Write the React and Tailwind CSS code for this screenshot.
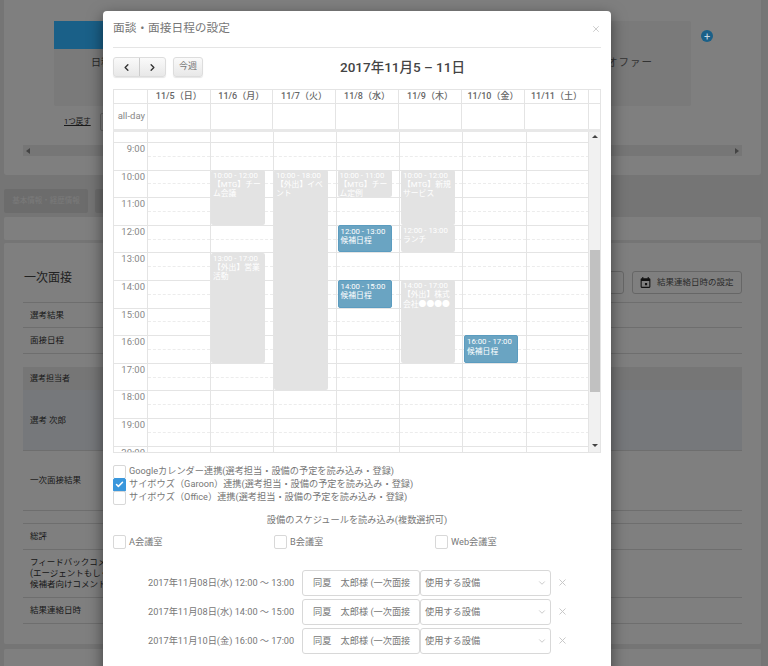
import { Check, ChevronDown, ChevronLeft, ChevronRight, X } from 'lucide-react';

const font = { fontFamily: 'Roboto, "Noto Sans CJK JP", sans-serif' };

const days = ['11/5（日）', '11/6（月）', '11/7（火）', '11/8（水）', '11/9（木）', '11/10（金）', '11/11（土）'];
const hours = [9, 10, 11, 12, 13, 14, 15, 16, 17, 18, 19, 20];

const events = [
  { x: 97, start: 10, end: 12, time: '10:00 - 12:00', title: '【MTG】チーム会議' },
  { x: 97, start: 13, end: 17, time: '13:00 - 17:00', title: '【外出】営業活動' },
  { x: 160, start: 10, end: 18, time: '10:00 - 18:00', title: '【外出】イベント' },
  { x: 223.5, start: 10, end: 11, time: '10:00 - 11:00', title: '【MTG】チーム定例' },
  { x: 223.5, start: 12, end: 13, time: '12:00 - 13:00', title: '候補日程', blue: true },
  { x: 223.5, start: 14, end: 15, time: '14:00 - 15:00', title: '候補日程', blue: true },
  { x: 287, start: 10, end: 12, time: '10:00 - 12:00', title: '【MTG】新規サービス' },
  { x: 287, start: 12, end: 13, time: '12:00 - 13:00', title: 'ランチ' },
  { x: 287, start: 14, end: 17, time: '14:00 - 17:00', title: '【外出】株式会社●●●●' },
  { x: 350, start: 16, end: 17, time: '16:00 - 17:00', title: '候補日程', blue: true },
];

const slots = [
  '2017年11月08日(水) 12:00 ～ 13:00',
  '2017年11月08日(水) 14:00 ～ 15:00',
  '2017年11月10日(金) 16:00 ～ 17:00',
];

const bodyCols = 'grid grid-cols-[33px_62.5px_63px_63px_63px_63.5px_63.5px_63px]';
const headCols = 'grid grid-cols-[33px_62.5px_62.5px_63px_63px_63px_63px_64px_1fr]';

function Box({ checked }) {
  return (
    <span className={`flex h-[14px] w-[13px] shrink-0 items-center justify-center rounded-[2px] border ${checked ? 'border-[#3a97dc] bg-[#3a97dc]' : 'border-[#d8d8d8] bg-white'}`}>
      {checked && <Check className="h-[9px] w-[9px] text-white" strokeWidth={4} />}
    </span>
  );
}

function Row({ label, className = '' }) {
  return <div className={`flex items-center border-b border-[#dcdcdc] pl-[7px] text-[8.5px] text-[#333] ${className}`}>{label}</div>;
}

function Background() {
  return (
    <div className="w-[757px] ml-[4px] flex flex-col">
      <div className="h-[175px] rounded-b-[3px] bg-white pl-[50px] pt-[21px]">
        <div className="flex items-start">
          <div className="flex h-[85px] w-[637px] rounded-[2px] bg-[#f4f4f4]">
            <div className="w-[150px]">
              <div className="relative z-10 flex h-[28px] items-center justify-center bg-[#1a6088]">
                <span className="h-px w-[12px] bg-[#8fb4c9]" />
              </div>
              <div className="mt-[6px] pl-[37px] text-[10px] text-[#555]">日程調整</div>
            </div>
            <div className="flex-1 pr-[38px] pt-[34px] text-right text-[10.5px] tracking-[1px] text-[#666]">オファー</div>
          </div>
          <div className="relative z-10 ml-[10px] mt-[9px] flex h-[12px] w-[12px] items-center justify-center rounded-full bg-[#1a6088] text-[11px] leading-none text-[#c8d8e2]">+</div>
        </div>
        <div className="flex items-center pl-[10px] pt-[7px]">
          <span className="text-[7.5px] text-[#333] underline">1つ戻す</span>
          <span className="ml-[9px] h-[18px] w-[40px] rounded-[2px] border border-[#ccc]" />
        </div>
        <div className="-ml-[31px] mt-[14px] flex h-[11px] w-[719px] items-center justify-between bg-[#ededed] px-[3px]">
          <span className="h-0 w-0 border-y-[3px] border-r-[4px] border-y-transparent border-r-[#888]" />
          <span className="h-0 w-0 border-y-[3px] border-l-[4px] border-y-transparent border-l-[#888]" />
        </div>
      </div>

      <div className="mt-[14px] flex h-[24px] gap-[7px]">
        <div className="flex w-[84px] items-center justify-center rounded-[2px] bg-[#d8d8d8] text-[7.5px] text-[#f4f4f4]">基本情報・経歴情報</div>
        <div className="w-[84px] rounded-[2px] bg-[#d8d8d8]" />
      </div>
      <div className="mt-[4px] h-[23px] rounded-[2px] bg-white" />

      <div className="mt-[3px] h-[401px] rounded-[2px] bg-white px-[19px]">
        <div className="flex h-[60px] items-start justify-between border-b border-[#dcdcdc] pt-[28px]">
          <h2 className="pl-px pt-px text-[12px] leading-[12px] text-[#444]">一次面接</h2>
          <div className="flex gap-[8px]">
            <div className="h-[23px] w-[40px] rounded-[3px] border border-[#ccc]" />
            <div className="flex h-[23px] w-[110px] items-center gap-[5px] rounded-[3px] border border-[#ccc] pl-[6px] text-[8.5px] text-[#555]">
              <svg viewBox="0 0 24 24" className="h-[13px] w-[13px] fill-[#222]">
                <path d="M19 4h-1V2h-2v2H8V2H6v2H5a2 2 0 0 0-2 2v14a2 2 0 0 0 2 2h14a2 2 0 0 0 2-2V6a2 2 0 0 0-2-2Zm0 16H5V9h14v11ZM11 13h4v4h-4v-4Z" />
              </svg>
              結果連絡日時の設定
            </div>
          </div>
        </div>
        <Row label="選考結果" className="h-[25px]" />
        <Row label="面接日程" className="h-[26px]" />
        <div className="mt-[13px] flex h-[23px] items-center bg-[#ededed] pl-[7px] text-[8px] text-[#333]">選考担当者</div>
        <Row label="選考 次郎" className="h-[61px] bg-[#edf1f6]" />
        <Row label="一次面接結果" className="h-[60px]" />
        <Row label="" className="h-[13px]" />
        <Row label="総評" className="h-[26px]" />
        <Row
          label={<span className="leading-[11px]">フィードバックコメント<br />(エージェントもしくは<br />候補者向けコメント)</span>}
          className="h-[48px]"
        />
        <Row label="結果連絡日時" className="h-[26px]" />
      </div>
      <div className="mt-[5px] h-[40px] rounded-[2px] bg-white" />
    </div>
  );
}

function Calendar() {
  return (
    <div className="border-r border-[#e4e4e4] text-[#666]">
      <div className={`${headCols} border-y border-l border-[#e4e4e4]`}>
        <div className="h-[12.5px]" />
        {days.map(d => (
          <div key={d} className="flex h-[12.5px] items-center justify-center whitespace-nowrap border-l border-[#e4e4e4] text-[9px] font-medium">{d}</div>
        ))}
        <div className="border-l border-[#e4e4e4]" />
      </div>
      <div className={`${headCols} h-[28px] border-b-[3px] border-l border-[#e8e8e8]`}>
        <div className="flex items-center justify-end pr-[2px] text-[9.5px] text-[#888]">all-day</div>
        {days.map(d => <div key={d} className="border-l border-[#e4e4e4]" />)}
        <div className="border-l border-[#e4e4e4]" />
      </div>

      <div className="flex h-[321px] border-b border-l border-[#e4e4e4]">
        <div className="relative w-[475px] overflow-hidden">
          <div className={`${bodyCols} h-[10.6px]`}>
            {Array.from({ length: 8 }, (_, i) => <div key={i} className={i ? 'border-l border-[#e4e4e4]' : ''} />)}
          </div>
          {hours.map(h => (
            <div key={h} className={`${bodyCols} h-[27.6px] border-t border-[#e4e4e4]`}>
              <div className="pr-[2px] pt-[1px] text-right text-[9.5px] leading-[10px] text-[#888]">{h}:00</div>
              {Array.from({ length: 7 }, (_, i) => (
                <div key={i} className="border-l border-[#e4e4e4]">
                  <div className="h-[13.8px] border-b border-dashed border-[#ececec]" />
                </div>
              ))}
            </div>
          ))}
          {events.map(e => (
            <div
              key={e.x + e.time}
              className={`absolute w-[54px] overflow-hidden rounded-[2px] px-[2px] text-[7.8px] leading-[9.3px] text-white ${e.blue ? 'border border-[#5b9cc0] bg-[#6aa4c2]' : 'bg-[#e3e3e3]'}`}
              style={{ left: e.x, top: 10.6 + (e.start - 9) * 27.6, height: (e.end - e.start) * 27.6 }}
            >
              <div className="pt-[1px]">{e.time}</div>
              <div>{e.title}</div>
            </div>
          ))}
        </div>
        <div className="relative w-[12px] border-l border-[#e4e4e4] bg-[#f1f1f1]">
          <span className="absolute left-[3px] top-[3px] h-0 w-0 border-x-[3px] border-b-[3px] border-x-transparent border-b-[#444]" />
          <div className="absolute left-[1px] top-[118px] h-[142px] w-[10px] bg-[#c1c1c1]" />
          <span className="absolute bottom-[5px] left-[3px] h-0 w-0 border-x-[3px] border-t-[3px] border-x-transparent border-t-[#444]" />
        </div>
      </div>
    </div>
  );
}

export default function App() {
  return (
    <div className="relative h-[666px] w-[768px] overflow-hidden bg-[#ebebeb]" style={font}>
      <Background />
      <div className="absolute inset-0 bg-black/50" />

      <div className="absolute left-[103px] top-[11px] z-20 h-[680px] w-[508px] rounded-[4px] bg-white px-[10px] text-[#777] shadow-[0_5px_15px_rgba(0,0,0,0.5)]">
        <div className="flex h-[37px] items-center justify-between border-b border-[#e5e5e5] pb-[1px]">
          <h3 className="text-[11.7px] text-[#777]">面談・面接日程の設定</h3>
          <X className="h-[10px] w-[10px] text-[#c4c4c4]" strokeWidth={2} />
        </div>

        <div className="mt-[9px] flex h-[20px] items-center">
          <div className="flex h-[20px] w-[53px] rounded-[3px] border border-[#ddd] bg-gradient-to-b from-[#fafafa] to-[#e8e8e8] shadow-[0_1px_1px_rgba(0,0,0,0.1)]">
            <div className="flex flex-1 items-center justify-center border-r border-[#ccc]">
              <ChevronLeft className="h-[11px] w-[11px] text-[#333]" strokeWidth={3} />
            </div>
            <div className="flex flex-1 items-center justify-center">
              <ChevronRight className="h-[11px] w-[11px] text-[#333]" strokeWidth={3} />
            </div>
          </div>
          <div className="ml-[7px] flex h-[20px] w-[30px] items-center justify-center rounded-[3px] border border-[#ddd] bg-gradient-to-b from-[#fafafa] to-[#e8e8e8] text-[9px] text-[#777] shadow-[0_1px_1px_rgba(0,0,0,0.1)]">今週</div>
          <h2 className="ml-[137px] whitespace-nowrap text-[13.5px] font-medium text-[#444]">2017年11月5 – 11日</h2>
        </div>

        <div className="mt-[12px]">
          <Calendar />
        </div>

        <div className="mt-[12px] text-[9.2px]">
          {['Googleカレンダー連携(選考担当・設備の予定を読み込み・登録)', 'サイボウズ（Garoon）連携(選考担当・設備の予定を読み込み・登録)', 'サイボウズ（Office）連携(選考担当・設備の予定を読み込み・登録)'].map((t, i) => (
            <div key={t} className="flex h-[13px] items-start gap-[3px] whitespace-nowrap leading-[11px]">
              <Box checked={i === 1} />
              {t}
            </div>
          ))}
        </div>

        <p className="mt-[10px] text-center text-[9.2px] leading-[12px]">設備のスケジュールを読み込み(複数選択可)</p>

        <div className="mt-[9px] grid grid-cols-[161px_161px_1fr] text-[9.2px]">
          {['A会議室', 'B会議室', 'Web会議室'].map(t => (
            <div key={t} className="flex items-center gap-[3px] leading-[11px]">
              <Box />
              {t}
            </div>
          ))}
        </div>

        <div className="mt-[21px] flex flex-col gap-[3px] text-[9.2px] text-[#777]">
          {slots.map(s => (
            <div key={s} className="flex h-[26px] items-center">
              <div className="w-[189px] whitespace-nowrap pl-[35px]">{s}</div>
              <div className="flex h-[26px] w-[118px] items-center overflow-hidden whitespace-nowrap rounded-[3px] border border-[#d8d8d8] pl-[10px]">同夏　太郎様 (一次面接</div>
              <div className="flex h-[26px] w-[131px] items-center justify-between rounded-[3px] border border-[#d8d8d8] pl-[4px] pr-[3px]">
                使用する設備
                <ChevronDown className="h-[10px] w-[10px] text-[#c0c0c0]" strokeWidth={2} />
              </div>
              <X className="ml-[6px] h-[11px] w-[11px] text-[#c4c4c4]" strokeWidth={2} />
            </div>
          ))}
        </div>
      </div>
    </div>
  );
}
